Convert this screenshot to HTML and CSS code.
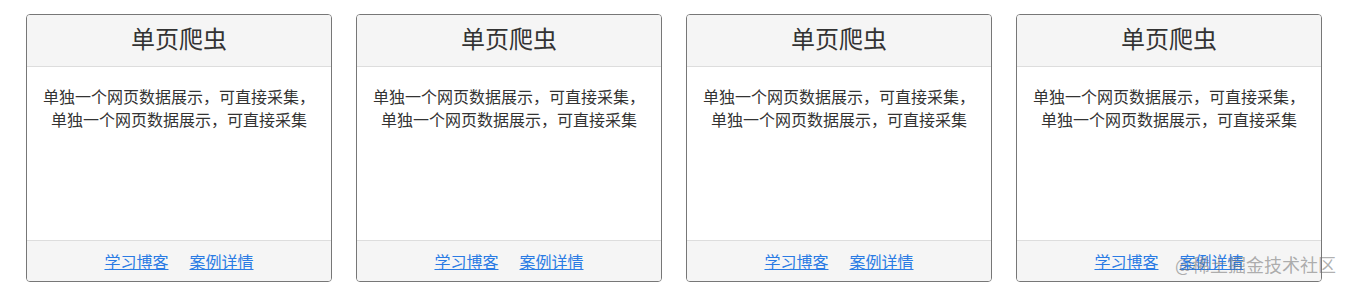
FILE: index.html
```html
<!DOCTYPE html>
<html lang="zh-CN">
<head>
<meta charset="utf-8">
<title>单页爬虫</title>
<link rel="stylesheet" href="styles.css">
</head>
<body>
<div class="cards">
  <div class="card">
    <div class="card-head">单页爬虫</div>
    <div class="card-body">单独一个网页数据展示，可直接采集，单独一个网页数据展示，可直接采集</div>
    <div class="card-foot"><a href="#">学习博客</a><a href="#">案例详情</a></div>
  </div>
  <div class="card">
    <div class="card-head">单页爬虫</div>
    <div class="card-body">单独一个网页数据展示，可直接采集，单独一个网页数据展示，可直接采集</div>
    <div class="card-foot"><a href="#">学习博客</a><a href="#">案例详情</a></div>
  </div>
  <div class="card">
    <div class="card-head">单页爬虫</div>
    <div class="card-body">单独一个网页数据展示，可直接采集，单独一个网页数据展示，可直接采集</div>
    <div class="card-foot"><a href="#">学习博客</a><a href="#">案例详情</a></div>
  </div>
  <div class="card">
    <div class="card-head">单页爬虫</div>
    <div class="card-body">单独一个网页数据展示，可直接采集，单独一个网页数据展示，可直接采集</div>
    <div class="card-foot"><a href="#">学习博客</a><a href="#">案例详情</a></div>
  </div>
</div>
<div class="watermark">@稀土掘金技术社区</div>
</body>
</html>
```
FILE: styles.css
```css
html, body {
  margin: 0;
  padding: 0;
  background: #fff;
}
body {
  font-family: "Noto Sans CJK SC", "Liberation Sans", sans-serif;
  color: #333;
  position: relative;
  width: 1347px;
  height: 287px;
  overflow: hidden;
}
.cards {
  display: flex;
  gap: 24px;
  padding: 14px 0 0 26px;
}
.card {
  width: 306px;
  height: 268px;
  box-sizing: border-box;
  border: 1px solid #777;
  border-radius: 4px;
  display: flex;
  flex-direction: column;
  overflow: hidden;
}
.card-head {
  background: #f5f5f5;
  border-bottom: 1px solid #ddd;
  text-align: center;
  font-size: 24px;
  line-height: 27px;
  padding: 9px 15px 15px;
}
.card-body {
  flex: 1;
  padding: 18px 15px 0;
  font-size: 16px;
  line-height: 23px;
  text-align: center;
}
.card-foot {
  background: #f5f5f5;
  border-top: 1px solid #ddd;
  height: 40px;
  display: flex;
  justify-content: center;
  align-items: center;
  gap: 21px;
  font-size: 16px;
}
.card-foot a {
  color: #2a7be4;
  text-decoration: underline;
}
.watermark {
  position: absolute;
  left: 1175px;
  top: 252px;
  font-size: 18px;
  line-height: 24px;
  color: rgba(110, 110, 110, 0.55);
  white-space: nowrap;
}
```
